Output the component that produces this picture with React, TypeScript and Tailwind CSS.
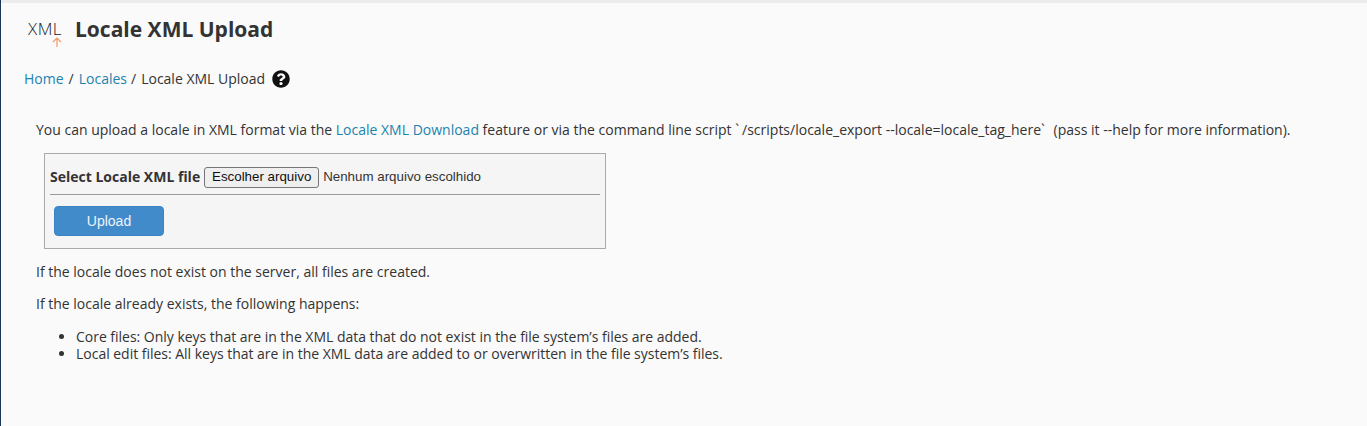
const LINK = "text-[#1b83ae]";

function XmlUploadIcon() {
  return (
    <svg width="36" height="36" viewBox="0 0 36 36" fill="none" className="shrink-0">
      <text x="1" y="24" fontSize="17" fontWeight="300" letterSpacing="0.5" fill="#222" fontFamily="'Open Sans', sans-serif">XML</text>
      {/* arrow */}
      <path d="M30 36v-9M26 31l4-4 4 4" stroke="#ef9a6c" strokeWidth="1.2" />
    </svg>
  );
}

export default function App() {
  return (
    <div className="min-h-[426px] w-[1367px] overflow-hidden bg-[#fafafa] border-l border-l-[#1d3557] font-['Open_Sans',sans-serif] text-[14px] leading-5 text-[#333]">
      <div className="h-[3px] bg-[#ececec]" />

      <header className="flex items-center pl-[26px] pt-[8px] h-[44px]">
        <XmlUploadIcon />
        <h1 className="ml-[12px] text-[21px] font-bold leading-7 text-[#333]">Locale XML Upload</h1>
      </header>

      <nav className="flex items-center pl-[23px] mt-[20px] h-[24px]">
        <a className={LINK}>Home</a>
        <span className="ml-[5px]">/</span>
        <a className={`ml-[5px] ${LINK}`}>Locales</a>
        <span className="ml-[4px]">/</span>
        <span className="ml-[5px]">Locale XML Upload</span>
        <svg width="18" height="18" viewBox="0 0 512 512" className="ml-[7px]" fill="#111">
          <path d="M504 256c0 137-111 248-248 248S8 393 8 256 119 8 256 8s248 111 248 248zM262.7 90c-54.5 0-89.3 23-116.5 63.8-3.5 5.3-2.4 12.4 2.7 16.3l34.7 26.3c5.2 3.9 12.6 3 16.7-2.1 17.9-22.7 30.1-35.8 57.3-35.8 20.4 0 45.7 13.1 45.7 32.9 0 15-12.4 22.7-32.5 34-23.5 13.2-54.6 29.6-54.6 70.7V300c0 6.6 5.4 12 12 12h56c6.6 0 12-5.4 12-12v-1.3c0-28.5 83.2-29.7 83.2-106.7 0-58-60.2-102-116.5-102zM256 338c-25.4 0-46 20.6-46 46s20.6 46 46 46 46-20.6 46-46-20.6-46-46-46z" />
        </svg>
      </nav>

      <main className="pl-[35px] pt-[29px]">
        <p>
          You can upload a locale in XML format via the <a className={LINK}>Locale XML Download</a> feature or via the command line script <span className="tracking-[3px]">`</span>/scripts/locale_export --locale=locale_tag_here<span className="tracking-[5px]">`</span> (pass it --help for more information).
        </p>

        <form className="ml-[8px] mt-[13px] w-[562px] h-[96px] border border-[#aaa] bg-[#f5f5f5] px-[5px]">
          <div className="flex items-center h-[41px] pt-[6px] border-b border-[#999]">
            <label className="font-bold">Select Locale XML file</label>
            <button type="button" className="ml-[4px] h-[21px] w-[115px] rounded-[3px] border border-[#767676] bg-[#efefef] font-['Liberation_Sans',sans-serif] text-[13.33px] leading-none text-[#111]">
              Escolher arquivo
            </button>
            <span className="ml-[4px] font-['Liberation_Sans',sans-serif] text-[13.33px] text-[#333]">Nenhum arquivo escolhido</span>
          </div>
          <button type="button" className="mt-[11px] ml-[4px] h-[30px] w-[110px] rounded-[4px] border border-[#3a84c5] bg-[#428bca] font-['Liberation_Sans',sans-serif] text-[14px] text-[#eef4fa]">
            Upload
          </button>
        </form>

        <p className="mt-[13px]">If the locale does not exist on the server, all files are created.</p>
        <p className="mt-[12px]">If the locale already exists, the following happens:</p>
        <ul className="mt-[14px] ml-[40px] list-disc leading-[17px] tracking-[-0.02px]">
          <li>Core files: Only keys that are in the XML data that do not exist in the file system’s files are added.</li>
          <li>Local edit files: All keys that are in the XML data are added to or overwritten in the file system’s files.</li>
        </ul>
      </main>
    </div>
  );
}
